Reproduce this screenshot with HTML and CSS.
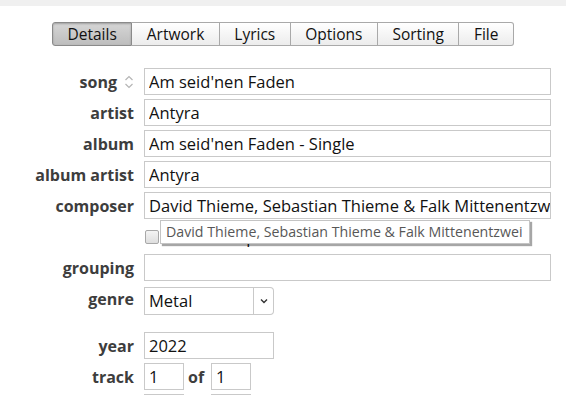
FILE: index.html
```html
<!DOCTYPE html>
<html lang="en">
<head>
    <meta charset="UTF-8">
    <title>Song info - Details</title>
    <link rel="stylesheet" href="styles.css">
</head>

<body>
    <div class="topbar"></div>

    <!-- tab bar -->
    <div class="tabs">
        <div class="tab active">Details</div>
        <div class="tab">Artwork</div>
        <div class="tab">Lyrics</div>
        <div class="tab">Options</div>
        <div class="tab">Sorting</div>
        <div class="tab">File</div>
    </div>

    <!-- detail fields -->
    <div class="form">
        <div class="label">song
            <svg class="sort" width="10" height="16" viewBox="0 0 10 16">
                <path d="M1.5 6 L5 2.5 L8.5 6 M1.5 10 L5 13.5 L8.5 10" fill="none" stroke="#b5b5b5" stroke-width="1.2"/>
            </svg>
        </div>
        <input class="field" value="Am seid'nen Faden" readonly>

        <div class="label">artist</div>
        <input class="field" value="Antyra" readonly>

        <div class="label">album</div>
        <input class="field" value="Am seid'nen Faden - Single" readonly>

        <div class="label">album artist</div>
        <input class="field" value="Antyra" readonly>

        <div class="label">composer</div>
        <input class="field" value="David Thieme, Sebastian Thieme &amp; Falk Mittenentzwei" readonly>

        <div></div>
        <div class="check-row">
            <span class="checkbox"></span>
            <span class="check-text">Show composer in all views</span>
            <div class="tooltip">David Thieme, Sebastian Thieme &amp; Falk Mittenentzwei</div>
        </div>

        <div class="label">grouping</div>
        <input class="field" value="" readonly>

        <div class="label">genre</div>
        <div class="select">
            <span class="select-value">Metal</span>
            <span class="select-arrow">
                <svg width="8" height="6" viewBox="0 0 8 6">
                    <path d="M1 1.5 L4 4.5 L7 1.5" fill="none" stroke="#333" stroke-width="1.4"/>
                </svg>
            </span>
        </div>

        <div class="label gap">year</div>
        <input class="field short gap" value="2022" readonly>

        <div class="label">track</div>
        <div class="pair">
            <input class="field tiny" value="1" readonly>
            <span class="of">of</span>
            <input class="field tiny" value="1" readonly>
        </div>

        <!-- next row, only its top edge is in view -->
        <div></div>
        <div class="pair">
            <input class="field tiny" value="" readonly>
            <span class="of blank"></span>
            <input class="field tiny" value="" readonly>
        </div>
    </div>
</body></html>
```

FILE: styles.css
```css
body {
    margin: 0;
    background: #fff;
    font-family: "Open Sans", "Noto Sans", sans-serif;
    overflow: hidden;
}

.topbar {
    height: 6px;
    background: #f0f0f0;
}

/* tabs */
.tabs {
    display: flex;
    justify-content: center;
    margin-top: 16px;
}
.tab {
    height: 24px;
    box-sizing: border-box;
    padding: 0 14.5px;
    font-size: 15.5px;
    line-height: 22px;
    color: #111;
    border: 1px solid #a9a9a9;
    border-left: none;
    background: linear-gradient(#ffffff, #ececec);
}
.tab:first-child {
    border-left: 1px solid #8a8a8a;
    border-radius: 3px 0 0 3px;
}
.tab:last-child {
    border-radius: 0 3px 3px 0;
}
.tab.active {
    background: linear-gradient(#d6d6d6, #bdbdbd);
    border-color: #8a8a8a;
    box-shadow: inset 0 1px 2px rgba(0, 0, 0, 0.25);
}

/* form grid */
.form {
    display: grid;
    grid-template-columns: 134px 1fr;
    column-gap: 10px;
    row-gap: 4px;
    margin-top: 22px;
    padding-right: 15px;
}
.label {
    display: flex;
    align-items: center;
    justify-content: flex-end;
    gap: 6px;
    height: 27px;
    font-size: 16px;
    font-weight: bold;
    color: #3d3d3d;
    white-space: nowrap;
}
.sort {
    margin-left: 1px;
}
.field {
    height: 27px;
    box-sizing: border-box;
    width: 100%;
    margin: 0;
    padding: 0 0 0 4px;
    border: 1px solid #c9c9c9;
    border-radius: 0;
    outline: none;
    font-family: inherit;
    font-size: 16.5px;
    color: #111;
    background: #fff;
}
.field.short {
    width: 130px;
}
.field.tiny {
    width: 40px;
}
.gap {
    margin-top: 13px;
}

/* checkbox + tooltip */
.check-row {
    position: relative;
    display: flex;
    align-items: flex-end;
    gap: 8px;
    height: 27px;
}
.checkbox {
    width: 12px;
    height: 12px;
    margin: 0 0 6px 1px;
    border: 1px solid #a8a8a8;
    border-radius: 2px;
    background: linear-gradient(#f4f4f4, #dedede);
}
.check-text {
    margin-bottom: 3px;
    font-size: 16.5px;
    line-height: 20px;
    color: #111;
    white-space: nowrap;
}
.tooltip {
    position: absolute;
    left: 16px;
    top: -3px;
    height: 24px;
    box-sizing: border-box;
    padding: 0 6px 0 5px;
    font-size: 14.2px;
    line-height: 22px;
    color: #575757;
    background: #fff;
    border: 1px solid #c4c4c4;
    box-shadow: 2px 2px 1px rgba(0, 0, 0, 0.35);
    white-space: nowrap;
}

/* genre select */
.select {
    display: flex;
    width: 130px;
    height: 28px;
    margin-top: 2px;
    box-sizing: border-box;
}
.select-value {
    flex: 1;
    border: 1px solid #c9c9c9;
    padding-left: 4px;
    font-size: 16.5px;
    line-height: 25px;
    color: #111;
}
.select-arrow {
    display: flex;
    align-items: center;
    justify-content: center;
    width: 19px;
    border: 1px solid #c9c9c9;
    border-left: none;
    border-radius: 0 4px 4px 0;
}

/* track / disc */
.pair {
    display: flex;
    align-items: center;
    gap: 4px;
}
.of {
    width: 19px;
    font-size: 16px;
    font-weight: bold;
    color: #3d3d3d;
}
```
